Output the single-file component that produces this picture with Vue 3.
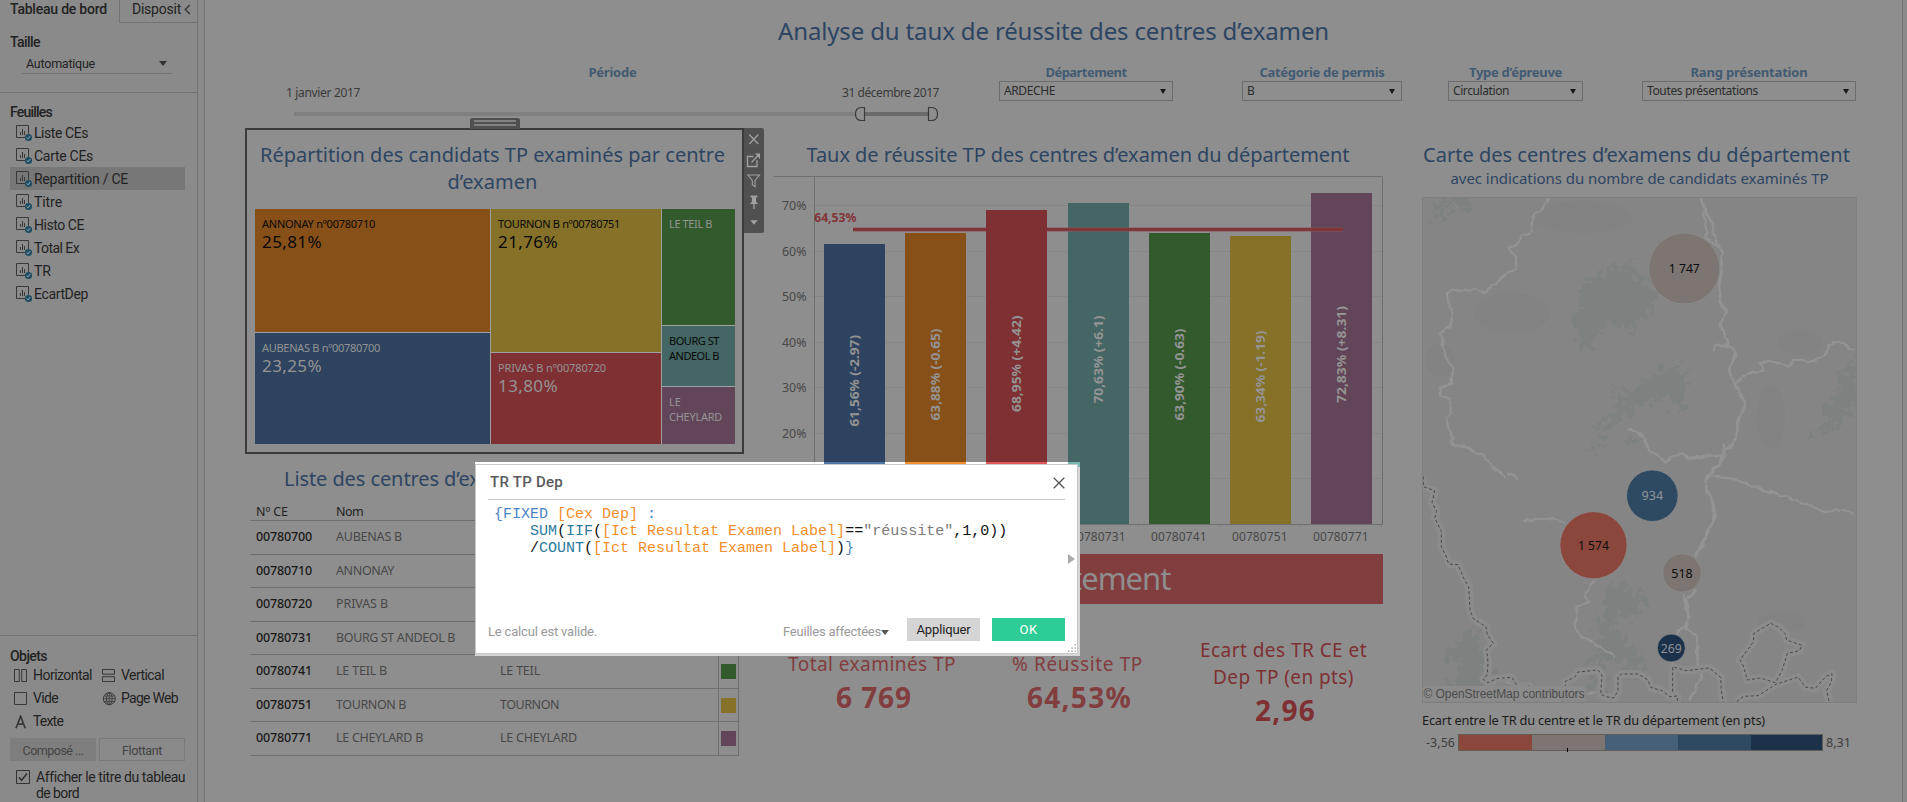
<script setup>
// Tracks a label out (or in) so that it occupies the given width.
const vFit = {
  mounted(el, { value }) {
    const natural = el.getBoundingClientRect().width
    el.style.letterSpacing = (value - natural) / el.textContent.length + 'px'
  }
}

const sheets = [
  ['Liste CEs', 54], ['Carte CEs', 59], ['Repartition / CE', 94], ['Titre', 28],
  ['Histo CE', 50], ['Total Ex', 45], ['TR', 17], ['EcartDep', 54]
]

const filters = [
  { label: 'Département', lw: 81, value: 'ARDECHE', vw: 51, cls: 'f-dep' },
  { label: 'Catégorie de permis', lw: 125, value: 'B', vw: 7, cls: 'f-cat' },
  { label: 'Type d’épreuve', lw: 93, value: 'Circulation', vw: 56, cls: 'f-type' },
  { label: 'Rang présentation', lw: 117, value: 'Toutes présentations', vw: 111, cls: 'f-rang' }
]

const centres = [
  { code: '00780700', nom: 'AUBENAS B', w: 66, c: 'blue' },
  { code: '00780710', nom: 'ANNONAY', w: 58, c: 'orange' },
  { code: '00780720', nom: 'PRIVAS B', w: 52, c: 'red' },
  { code: '00780731', nom: 'BOURG ST ANDEOL B', w: 119, c: 'teal' },
  { code: '00780741', nom: 'LE TEIL B', w: 51, ville: 'LE TEIL', vw: 40, c: 'green' },
  { code: '00780751', nom: 'TOURNON B', w: 70, ville: 'TOURNON', vw: 59, c: 'yellow' },
  { code: '00780771', nom: 'LE CHEYLARD B', w: 87, ville: 'LE CHEYLARD', vw: 77, c: 'purple' }
]

const bars = [
  { x: 50, top: 68, label: '61,56% (-2.97)', y1: 159, y2: 250.5, c: 'blue' },
  { x: 131, top: 57, label: '63,88% (-0.65)', y1: 152.5, y2: 244.5, c: 'orange' },
  { x: 212, top: 34, label: '68,95% (+4.42)', y1: 139.5, y2: 236, c: 'red' },
  { x: 294, top: 27, label: '70,63% (+6.1)', y1: 139.5, y2: 227.5, c: 'teal', code: '00780731' },
  { x: 375, top: 57, label: '63,90% (-0.63)', y1: 152.5, y2: 244.5, c: 'green', code: '00780741' },
  { x: 456, top: 60, label: '63,34% (-1.19)', y1: 154.5, y2: 246.5, c: 'yellow', code: '00780751' },
  { x: 537, top: 17, label: '72,83% (+8.31)', y1: 130, y2: 227, c: 'purple', code: '00780771' }
]
const ticks = [
  ['70%', 29.5], ['60%', 75.5], ['50%', 120.5], ['40%', 166.5], ['30%', 211.5], ['20%', 257.5], ['', 302.5]
]
const bubbles = [
  { x: 262.3, y: 71.5, r: 35.5, t: '1 747', w: 31, fill: '#7c7572', ink: '#0c0c0c' },
  { x: 230.3, y: 298.7, r: 25.8, t: '934', w: 21.5, fill: '#2e4a63', ink: '#8f9499' },
  { x: 171.5, y: 348.2, r: 33.6, t: '1 574', w: 31, fill: '#8b473c', ink: '#0c0c0c' },
  { x: 260, y: 376, r: 19.2, t: '518', w: 21.5, fill: '#7c7572', ink: '#0c0c0c' },
  { x: 249.3, y: 451, r: 14, t: '269', w: 21, fill: '#1b3049', ink: '#8f9499' }
]
</script>

<template>
  <div class="app">
    <aside class="side">
      <div class="tabs">
        <div class="tab on"><b v-fit="97">Tableau de bord</b></div>
        <div class="tab off">
          <span class="clip"><span v-fit="49">Disposit</span></span>
          <svg width="7" height="11" viewBox="0 0 7 11"><path d="M5.8 1 1.3 5.5 5.8 10" fill="none" stroke="#333" stroke-width="1.3" /></svg>
        </div>
      </div>
      <h4 class="taille"><b v-fit="30">Taille</b></h4>
      <div class="select"><span v-fit="69">Automatique</span><i class="tri"></i></div>
      <div class="feuilles">
        <h4><b v-fit="42">Feuilles</b></h4>
        <div v-for="(s, i) in sheets" :key="s[0]" class="sheet" :class="{ active: i === 2 }">
          <svg width="17" height="17" viewBox="0 0 17 17">
            <path d="M9.3 12.5H.5V.5h12v8.3" fill="none" stroke="#383838" />
            <path d="M4.5 10V7M6.5 10V4M8.5 10V6" stroke="#383838" />
            <circle cx="12.5" cy="12.5" r="3.6" fill="#1f4d63" />
            <path d="m10.8 12.5 1.2 1.3 2.2-2.6" fill="none" stroke="#a5b0b5" />
          </svg>
          <span v-fit="s[1]">{{ s[0] }}</span>
        </div>
      </div>
      <div class="objets">
        <h4><b v-fit="37">Objets</b></h4>
        <div class="objs">
          <div><svg width="14" height="14" viewBox="0 0 14 14"><path d="M.5.5h4.8v12H.5zM7.7.5h4.8v12H7.7z" /></svg><span v-fit="59">Horizontal</span></div>
          <div><svg width="14" height="14" viewBox="0 0 14 14"><path d="M.5.5h12v4.7H.5zM.5 7.7h12v4.8H.5z" /></svg><span v-fit="43">Vertical</span></div>
          <div><svg width="14" height="14" viewBox="0 0 14 14"><path d="M.5.5h12v12H.5z" /></svg><span v-fit="25">Vide</span></div>
          <div><svg width="14" height="14" viewBox="0 0 14 14"><circle cx="7.3" cy="6.7" r="6" /><ellipse cx="7.3" cy="6.7" rx="2.8" ry="6" /><path d="M7.3.7v12M2 4h10.6M1.3 6.7h12M2 9.5h10.6" stroke-width=".8" /></svg><span v-fit="57">Page Web</span></div>
          <div><svg width="14" height="14" viewBox="0 0 14 14"><path d="M2 13.3 6.6 1.3l4.6 12M3.6 9.2h6" stroke-width="1.7" /></svg><span v-fit="30">Texte</span></div>
        </div>
        <div class="modes">
          <div class="mode sel"><span v-fit="61">Composé ...</span></div>
          <div class="mode"><span v-fit="40">Flottant</span></div>
        </div>
        <div class="check">
          <svg width="14" height="14" viewBox="0 0 14 14"><path d="M.5.5h13v13H.5z" fill="none" stroke="#333" /><path d="m3 7.3 2.6 3L11 3.5" fill="none" stroke="#333" stroke-width="1.5" /></svg>
          <div><span v-fit="148">Afficher le titre du tableau</span><br><span v-fit="43">de bord</span></div>
        </div>
      </div>
    </aside>

    <main class="canvas">
      <h1><span v-fit="551">Analyse du taux de réussite des centres d’examen</span></h1>

      <div class="filters">
        <div class="period">
          <div class="flabel"><b v-fit="48">Période</b></div>
          <div class="dates"><span v-fit="74">1 janvier 2017</span><span v-fit="97">31 décembre 2017</span></div>
          <svg class="slider" width="655" height="16" viewBox="0 0 655 16">
            <path d="M9 6h562v4H9z" fill="#808080" />
            <path d="M580 6h64v4h-64z" fill="#6a6a6a" />
            <path d="M579.5 1.500v13h-3c-4.500 0-6-3-6-6.500s1.500-6.500 6-6.500zM643.500 1.500v13h3c4.500 0 6-3 6-6.500s-1.500-6.500-6-6.500z" fill="#8e8e8e" stroke="#3a3a3a" stroke-width="1.200" />
          </svg>
        </div>
        <div v-for="f in filters" :key="f.label" class="filter" :class="f.cls">
          <div class="flabel"><b v-fit="f.lw">{{ f.label }}</b></div>
          <div class="drop"><span v-fit="f.vw">{{ f.value }}</span><i class="tri dk"></i></div>
        </div>
      </div>

      <div class="cols">
        <section class="left">
          <div class="zone">
            <div class="grip"><i></i><i></i></div>
            <div class="panel">
              <h2><span v-fit="465">Répartition des candidats TP examinés par centre</span><br><span v-fit="90">d’examen</span></h2>
              <div class="tree">
                <div class="tcol a">
                  <div class="tile orange dark"><span v-fit="113">ANNONAY nº00780710</span><em v-fit="60">25,81%</em></div>
                  <div class="tile blue"><span v-fit="118">AUBENAS B nº00780700</span><em v-fit="60">23,25%</em></div>
                </div>
                <div class="tcol b">
                  <div class="tile yellow dark"><span v-fit="122">TOURNON B nº00780751</span><em v-fit="60">21,76%</em></div>
                  <div class="tile red"><span v-fit="108">PRIVAS B nº00780720</span><em v-fit="60">13,80%</em></div>
                </div>
                <div class="tcol c">
                  <div class="tile green"><span v-fit="43">LE TEIL B</span></div>
                  <div class="tile teal dark"><span v-fit="50">BOURG ST</span><span v-fit="50">ANDEOL B</span></div>
                  <div class="tile purple"><span v-fit="12">LE</span><span v-fit="53">CHEYLARD</span></div>
                </div>
              </div>
            </div>
            <svg class="tools" width="20" height="105" viewBox="0 0 20 105" fill="none" stroke="#a0a0a0" stroke-width="1.300">
              <path d="M0 0h18a2 2 0 0 1 2 2v101a2 2 0 0 1-2 2H0z" fill="#505050" stroke="none" />
              <path d="m5.300 6.500 9 9.500M14.300 6.500l-9 9.500" />
              <path d="M9.500 28.500h-6v10h9.500v-6.500M7.500 34.500l7-7.500" />
              <path d="M11 25.500h5v5.500z" fill="#a0a0a0" stroke="none" />
              <path d="M3.800 47h11.800l-4.500 5.500v6.300l-2.800-2v-4.300z" stroke-width="1.100" />
              <path d="M6.500 67.500h7v1.500l-1.500.8v3.700l2 2.500h-8l2-2.500v-3.700l-1.500-.8z" fill="#a0a0a0" stroke="none" />
              <path d="M10 76v5" />
              <path d="M6.300 92.300h7.400L10 96.800z" fill="#a0a0a0" stroke="none" />
            </svg>
          </div>
          <h2 class="ltitle"><span v-fit="249">Liste des centres d’examen</span></h2>
          <div class="table">
            <div class="tr th"><span><i v-fit="32">Nº CE</i></span><span><i v-fit="27">Nom</i></span></div>
            <div v-for="c in centres" :key="c.code" class="tr">
              <span class="code"><i v-fit="56">{{ c.code }}</i></span>
              <span><i v-fit="c.w">{{ c.nom }}</i></span>
              <span><i v-if="c.ville" v-fit="c.vw">{{ c.ville }}</i></span>
              <span class="sw"><u :class="c.c"></u></span>
            </div>
          </div>
        </section>

        <section class="mid">
          <h2><span v-fit="543">Taux de réussite TP des centres d’examen du département</span></h2>
          <svg class="chart" width="609" height="378" viewBox="0 0 609 378">
            <g v-for="t in ticks" :key="t[1]">
              <path :d="`M37 ${t[1]}H608`" stroke="#868686" />
              <text v-if="t[0]" x="8" :y="t[1] + 4" textLength="24.500" lengthAdjust="spacingAndGlyphs" class="ax">{{ t[0] }}</text>
            </g>
            <path d="M0 .5H608.500V348.500H40.500V0" fill="none" stroke="#6f6f6f" />
            <g v-for="b in bars" :key="b.label">
              <rect :x="b.x" :y="b.top" width="61" :height="348 - b.top" :class="'s-' + b.c" />
              <path :d="`M${b.x + 70.500} 349v4`" stroke="#868686" />
              <text v-if="b.code" :x="b.x + 2" y="364.700" textLength="55.500" class="ax">{{ b.code }}</text>
            </g>
            <path d="M79 53.500H212M273 53.500H569" stroke="#88575a" stroke-width="4" />
            <path d="M79 53.500H569" stroke="#7e3033" stroke-width="2.600" />
            <text x="40.300" y="46" textLength="42" lengthAdjust="spacingAndGlyphs" class="avg">64,53%</text>
            <text v-for="b in bars" :key="b.label" class="pct" :transform="`translate(${b.x + 35.300} ${b.y2}) rotate(-90)`" :textLength="b.y2 - b.y1" lengthAdjust="spacingAndGlyphs">{{ b.label }}</text>
          </svg>
          <div class="banner"><span v-fit="184">Département</span></div>
          <div class="kpis">
            <div class="kpi"><span v-fit="168">Total examinés TP</span><b v-fit="76">6 769</b></div>
            <div class="kpi"><span v-fit="131">% Réussite TP</span><b v-fit="105">64,53%</b></div>
            <div class="kpi last"><span v-fit="167">Ecart des TR CE et</span><span v-fit="141">Dep TP (en pts)</span><b v-fit="61">2,96</b></div>
          </div>
        </section>

        <section class="right">
          <h2><span v-fit="427">Carte des centres d’examens du département</span></h2>
          <h3><span v-fit="378">avec indications du nombre de candidats examinés TP</span></h3>
          <svg class="map" width="435" height="506" viewBox="0 0 435 506">
            <defs>
              <filter id="rough" x="-10%" y="-10%" width="120%" height="120%">
                <feTurbulence type="fractalNoise" baseFrequency=".14" numOctaves="4" seed="4" result="n" />
                <feDisplacementMap in="SourceGraphic" in2="n" scale="30" xChannelSelector="R" yChannelSelector="G" />
              </filter>
              <filter id="wobble" x="-10%" y="-10%" width="120%" height="120%">
                <feTurbulence type="fractalNoise" baseFrequency=".13" numOctaves="2" seed="9" result="n" />
                <feDisplacementMap in="SourceGraphic" in2="n" scale="5" xChannelSelector="R" yChannelSelector="G" />
              </filter>
            </defs>
            <rect width="435" height="506" fill="#858585" />
            <g fill="#838383">
              <ellipse cx="90" cy="116" rx="38" ry="20" /><ellipse cx="18" cy="163" rx="14" ry="16" />
              <ellipse cx="378" cy="145" rx="22" ry="13" /><ellipse cx="349" cy="220" rx="14" ry="32" />
              <ellipse cx="160" cy="20" rx="50" ry="16" /><ellipse cx="360" cy="425" rx="24" ry="10" />
            </g>
            <g filter="url(#rough)" fill="#7d8180">
              <path d="M12 6l10-5 22-1 9 10-7 5-14-5-9 3-2 9-9 4z" />
              <path d="M160 86l14-6 12-10 14-3 13 2 1 11 9 8 12 5 2 6-7 7-4 12-9 8-9 8-12-6-10-2-4 8-10 4-2 13-8 5-6-12-1-14-6-8 8-10z" />
              <path d="M180 188l14 6 10 2 8-5 10-6 14-10 15-8 10 5 2 14-4 10 5 12-6 9-8-13-12-6-10 10-17 2-9 12-19 6-18 5 16-12 12-4 5-16z" />
              <path d="M168 247l14-6 10 3-12 4-10 6zM200 238l20 4-10 6z" />
              <path d="M434 156v56l-9 1-6 8-8 14-14 3-8 7 8-16 8-9-4-8 14-14 5-17z" />
              <path d="M184 392l13-5 11 4 6 5 9-2 5 3-10 11-2 11-12 1-8-3-5 14 8 8 5 12 15 4 5 6-3 18-12-2-9-12-14-3-5 6 2 30-12-2 1-16-10-12 4-6 10 2 3-14-5-12 4-12z" />
              <path d="M40 437l14-6 6 4-2 12 8 8 1 14-6 8 6 6 2 14-14 4-30-2 4-14 8-8-4-10-10-8 4-8 9-2z" />
            </g>
            <g fill="none" stroke="#939393" stroke-linejoin="round" filter="url(#wobble)">
              <g transform="translate(-22 -17) scale(.33333)" stroke-width="7">
                <path d="M448 50l-25 42-22 10-5 50-12 12-22 2-8 24-24 12 0 16 22 14-4 34-32 18-26 24-18 10-14 20-34-12-36 8-28-6-16 12 2 44 10 6-2 50-32 16 6 30 6 26-2 8 28 46-6 44-34 16 0 20 30 14 2 40-12 14 14 46 2 34 50 10 26 20 20 2 24 30 24 22 14 16M322 880l18 4 16 12" />
                <path d="M902 50l18 48 18 32 6 50 22 32-2 66-8 44 8 54 18 20-22 38 24 50-2 18M940 514l8-14 36-8 26 30-18 34-2 28 18 32 30 60-26 48 0 30-14 44-28 14-6 30" stroke-width="8" />
                <path d="M912 90l8 86 46 34" />
                <path d="M1008 610l22-20 26-12 34-10-8-18 20-8 68 14 10-14 40 2 28-2 26-18 14-26 16-14 28 6 12 12 18 8" />
                <path d="M688 748l38 16 22 50 32 14 14 22 18-20 38-10 22 16 70-10 18-4 8 24M970 790l8 40-20 24-42 48" />
              </g>
              <g transform="translate(-22 253) scale(.33333)" stroke-width="8">
                <path d="M970 0l-10 36-42 44-2 20 22 60 2 56-34 72-20 34M926 78l70 8 110 38 90 28 76 34 54-8 36 14" stroke-width="7" />
                <path d="M914 110l28 52 2 44-36 66-22 44M886 420l-24 28 2 50-8 32-24 10-6 60M852 430l10 70-4 40 30 12 6 90 12 40-38 66" />
                <path d="M368 214l32-6 54-2 42 14M586 390l-34 42 16 24-36 14-2 40-12 8 24 40 36 18 40 28 28 18" stroke-width="6" />
                <path d="M282 706l6-26 30 16 70 6M560 730l36-4 30 24" />
              </g>
            </g>
            <g transform="translate(-22 253) scale(.33333)" fill="none" stroke-linejoin="round">
              <g v-for="k in 2" :key="k" :class="k === 1 ? 'halo' : 'border'">
                <path d="M70 80v30l34 12-8 36 14 26-6 20 20 40v46l14 28 8 24 28 2 18 42 14 24 4 70 10 26 38 24 4 24 18 26-20 18 4 40-2 36-12 14 14 10 26-12 46-4 18 30 34-4 8 18 30 14 18 24 42-6 10-34v-30l28-12 10-16 60-6 12 16-4 56 14 8 26 4 12-22v-40l10-10h50l30 18 8 22 34 10 24 18 22-2v30l14 20" />
                <path d="M818 725v-75l40 12 70-8 34 28 2 40 6 36" />
                <path d="M1112 520l24 12 20 20 4 18 46 16-8 16-36 8-16 52-20 36-44-14-40 6-12-42-10-18 40-54 2-26z" />
                <path d="M1010 755l20-16 44-2 54-34 66-22 22 30 30 4 32-36 18-8-2 26-14 24 8 36" />
              </g>
            </g>
            <rect x=".5" y=".5" width="434" height="505" fill="none" stroke="#7f7f7f" />
            <rect x="1" y="489" width="162" height="15.500" fill="#8b8b8b" />
            <text x="1.500" y="501" textLength="161" class="osm">© OpenStreetMap contributors</text>
            <g v-for="b in bubbles" :key="b.t">
              <circle :cx="b.x" :cy="b.y" :r="b.r" :fill="b.fill" stroke="#8b8b8b" stroke-width=".8" />
              <text :x="b.x - b.w / 2" :y="b.y + 4.500" :textLength="b.w" lengthAdjust="spacingAndGlyphs" :fill="b.ink" class="bub">{{ b.t }}</text>
            </g>
          </svg>
          <div class="ltext"><span v-fit="343">Ecart entre le TR du centre et le TR du département (en pts)</span></div>
          <div class="legend"><span v-fit="29">-3,56</span><div class="ramp"><i></i><i></i><i></i><i></i><i></i><u></u></div><span v-fit="25">8,31</span></div>
        </section>
      </div>
    </main>

    <div class="dialog">
      <div class="strip"><i class="p1"></i><i class="p2"></i><i class="p3"></i><i class="p4"></i></div>
      <div class="dbody">
        <header><b v-fit="73">TR TP Dep</b><svg width="12" height="12" viewBox="0 0 12 12"><path d="M.7.7 11.300 11.300M11.300.7.7 11.300" stroke="#555" stroke-width="1.300" /></svg></header>
        <pre><span class="kw">{FIXED</span> <span class="fd">[Cex Dep]</span> <span class="kw">:</span>
    <span class="fn">SUM</span>(<span class="fn">IIF</span>(<span class="fd">[Ict Resultat Examen Label]</span>==<span class="st">"réussite"</span>,1,0))
    /<span class="fn">COUNT</span>(<span class="fd">[Ict Resultat Examen Label]</span>)<span class="kw">}</span></pre>
        <footer>
          <span class="ok-msg" v-fit="109">Le calcul est valide.</span>
          <span class="aff" v-fit="98">Feuilles affectées</span><i class="tri sm"></i>
          <button class="apply"><span v-fit="54">Appliquer</span></button>
          <button class="ok"><span v-fit="18">OK</span></button>
        </footer>
        <i class="expand"></i>
        <svg class="resize" width="9" height="9" viewBox="0 0 9 9" fill="#aaa"><path d="M6.500 0h1.500v1.500H6.500zM6.500 3.300h1.500v1.500H6.500zM6.500 6.500h1.500v1.500H6.500zM3.300 3.300h1.500v1.500H3.300zM3.300 6.500h1.500v1.500H3.300zM0 6.500h1.500v1.500H0z" /></svg>
      </div>
    </div>
  </div>
</template>

<style>
body { background: #8e8e8e; overflow: hidden; }
</style>

<style scoped>
.app { position: relative; display: flex; gap: 6px; width: 1907px; height: 802px; overflow: hidden; background: #8a8a8a; font-family: "Noto Sans", "Open Sans", sans-serif; color: #222; }
.app * { box-sizing: border-box; }
h1, h2, h3, h4, pre { margin: 0; font-weight: 400; }
span, b, i, em { font-style: normal; white-space: nowrap; }
h1 span, h2 span, h3 span, h4 b, .tab b, .clip span, .flabel b, .dates span, .drop span, .sheet span, .objs span, .mode span, .check span,
.tile span, .tile em, .tr i, .kpi span, .kpi b, .banner span, .ltext span, .legend span, .dialog b, .dialog span { display: inline-block; }
.dialog pre span { display: inline; }
.tri { width: 0; height: 0; border: 4.500px solid transparent; border-bottom: 0; border-top: 5.500px solid #333; }

.blue { background: #2e435f; } .orange { background: #875019; } .red { background: #7e3033; } .teal { background: #446664; }
.green { background: #335a2d; } .yellow { background: #857128; } .purple { background: #63455a; }
.s-blue { fill: #2e435f; } .s-orange { fill: #875019; } .s-red { fill: #7e3033; } .s-teal { fill: #446664; }
.s-green { fill: #335a2d; } .s-yellow { fill: #857128; } .s-purple { fill: #63455a; }

.side { width: 198px; height: 802px; border-right: 1px solid #727272; font: 14px/23px Roboto, sans-serif; color: #222; display: flex; flex-direction: column; }
.side b { font-weight: 500; }
.tabs { display: flex; height: 23px; }
.tab { height: 23px; line-height: 19px; }
.tab.on { width: 119px; padding-left: 10px; }
.tab.off { flex: 1; display: flex; padding-left: 12px; border-left: 1px solid #727272; border-bottom: 1px solid #727272; }
.clip { width: 49px; }
.tab svg { margin: 4px 0 0 3px; }
.taille { margin-top: 8px; padding-left: 10px; }
.select { width: 150px; height: 21px; margin: -1px 0 18px 22px; padding: 1px 5px 0 4px; border-bottom: 1px solid #727272; display: flex; justify-content: space-between; align-items: center; font-size: 12.500px; line-height: 20px; }
.feuilles { border-top: 1px solid #727272; height: 543px; padding-top: 9px; }
.feuilles h4 { padding-left: 10px; height: 19px; line-height: 21px; }
.sheet { width: 175px; height: 23px; margin-left: 10px; padding: 4px 0 0 6px; display: flex; gap: 1px; line-height: 16px; }
.sheet svg { flex: none; }
.sheet.active { background: #777; }
.objets { border-top: 1px solid #727272; flex: 1; padding: 9px 12px 0 10px; }
.objets h4 { height: 19px; line-height: 22px; }
.objs { display: grid; grid-template-columns: 88px 88px; grid-auto-rows: 23px; padding-left: 4px; }
.objs div { display: flex; align-items: center; gap: 5px; }
.objs svg { fill: none; stroke: #383838; }
.modes { display: flex; gap: 3px; margin-top: 5px; }
.mode { width: 86px; height: 23px; border: 1px solid #7a7a7a; text-align: center; font-size: 12.500px; line-height: 24px; color: #444; }
.mode.sel { background: #7e7e7e; border-color: #7e7e7e; }
.check { display: flex; gap: 6px; margin: 9px 0 0 6px; line-height: 16px; }
.check svg { flex: none; }
.check div { margin-top: -1px; white-space: nowrap; }

.canvas { width: 1699px; height: 802px; border-left: 1px solid #757575; border-right: 1px solid #757575; background: #8e8e8e; padding-left: 40px; }
h1 { margin-left: -40px; height: 61px; text-align: center; font-size: 24px; line-height: 61px; color: #2d4562; }
h2 { font-size: 20px; color: #2d4562; text-align: center; }
h3 { height: 20px; font-size: 15px; line-height: 20px; color: #2d4562; text-align: center; }

.filters { display: flex; height: 67px; padding-left: 40px; }
.period { width: 655px; }
.flabel { height: 20px; line-height: 23px; font-size: 13px; text-align: center; color: #425b74; }
.dates { display: flex; justify-content: space-between; padding: 2px 1px 0; height: 25px; font-size: 12px; line-height: 19px; color: #3a3a3a; }
.slider { display: block; }
.drop { height: 20px; border: 1px solid #6c6c6c; display: flex; justify-content: space-between; align-items: center; padding: 0 6px 0 4px; font-size: 12px; line-height: 20px; color: #2c2c2c; }
.tri.dk { border-top-color: #181818; border-width: 5px 3.500px 0; }
.f-dep { margin-left: 59px; width: 174px; }
.f-cat { margin-left: 69px; width: 160px; }
.f-type { margin-left: 46px; width: 135px; }
.f-rang { margin-left: 59px; width: 214px; }

.cols { display: flex; align-items: flex-start; }
.left { width: 519px; }
.zone { position: relative; display: flex; align-items: flex-start; }
.grip { position: absolute; left: 225px; top: -10px; width: 50px; height: 11px; border-radius: 2px 2px 0 0; background: #505050; padding: 2px 4px; display: flex; flex-direction: column; gap: 2px; }
.grip i { height: 2px; background: #828282; }
.panel { width: 499px; height: 326px; border: 2px solid #3b3b3b; padding: 11px 8px 0; }
.panel h2 { line-height: 27px; white-space: nowrap; height: 68px; margin: 0 -6px 0 -10px; }
.tree { display: flex; gap: 1px; width: 480px; height: 235px; background: #a0a0a0; }
.tcol { display: grid; gap: 1px; }
.tcol.a { width: 235px; grid-template-rows: 123px 111px; }
.tcol.b { width: 170px; grid-template-rows: 143px 91px; }
.tcol.c { width: 73px; grid-template-rows: 116px 60px 57px; }
.tile { padding: 7px 0 0 7px; display: flex; flex-direction: column; align-items: flex-start; font-size: 11px; line-height: 15px; color: #949494; }
.tile em { font-size: 17px; line-height: 22px; }
.tile.dark { color: #080808; }
.ltitle { height: 48px; line-height: 49px; padding-left: 39px; text-align: left; }
.table { margin-left: 5px; width: 489px; border-top: 0; font-size: 12.500px; }
.tr { display: grid; grid-template-columns: 86px 164px 218px 21px; height: 33.500px; line-height: 31px; border-bottom: 1px solid #6f6f6f; color: #484848; }
.tr.th { height: 19px; line-height: 19px; color: #222; }
.tr > span:first-child { padding-left: 6px; }
.code { color: #181818; font-weight: 500; }
.sw { border: solid #6f6f6f; border-width: 0 1px; padding: 9px 2px; }
.sw u { display: block; width: 15px; height: 15px; }

.mid { width: 609px; margin-left: 10px; }
.mid h2, .right h2 { line-height: 53px; white-space: nowrap; }
.mid h2 { height: 48px; margin-left: -1px; }
.chart { display: block; }
.ax { font-size: 12px; fill: #474747; }
.avg { font-size: 12.500px; font-weight: 700; fill: #823437; }
.pct { font-size: 12.500px; font-weight: 700; fill: #949494; }
.banner { height: 50px; line-height: 49px; background: #823d3f; color: #8e8e8e; font-size: 31px; text-align: center; }
.kpis { display: grid; grid-template-columns: 197px 214px 198px; }
.kpi { padding-top: 47px; display: flex; flex-direction: column; align-items: center; font-size: 19px; line-height: 27px; color: #823d3f; }
.kpi.last { padding-top: 33px; color: #7e3033; }
.kpi span { margin-left: -1px; }
.kpi b { font-size: 28px; line-height: 39px; margin-left: 3px; }

.right { width: 435px; margin-left: 39px; }
.right h2 { height: 40px; margin: 0 0 0 -6px; }
.map { display: block; margin-top: 9px; }
.halo { stroke: #8b8b8b; stroke-width: 24; }
.border { stroke: #4a4a4a; stroke-width: 3; stroke-dasharray: 9 7; }
.osm { font: 12px "Liberation Sans", sans-serif; fill: #4c4c4c; }
.bub { font-size: 13px; }
.ltext { margin-top: 8px; height: 18px; line-height: 18px; font-size: 12.800px; color: #1c1c1c; }
.legend { display: flex; align-items: center; gap: 3px; margin-top: 5px; height: 17px; padding-left: 4px; font-size: 12.500px; line-height: 15px; color: #3d3d3d; }
.ramp { position: relative; display: grid; grid-template-columns: 73px 73px 73px 73px 71px; width: 365px; height: 17px; border: 1px solid #625d57; }
.ramp i:nth-child(1) { background: #8b473c; } .ramp i:nth-child(2) { background: #7c7572; } .ramp i:nth-child(3) { background: #466079; }
.ramp i:nth-child(4) { background: #2e4a63; } .ramp i:nth-child(5) { background: #1b3049; }
.ramp u { position: absolute; left: 108px; top: 13px; width: 1px; height: 4px; background: #000; }

.dialog { position: absolute; left: 475px; top: 462px; width: 605px; height: 194px; background: #d6d6d6; font-family: Roboto, sans-serif; }
.strip { display: flex; height: 2px; background: #fff; }
.strip .p1 { width: 61px; margin-left: 349px; background: #4e79a7; }
.strip .p2 { width: 61px; margin-left: 20px; background: #f28e2b; }
.strip .p3 { width: 61px; margin-left: 20px; background: #e15759; }
.strip .p4 { width: 12px; margin-left: 21px; height: 5px; background: #76b7b2; }
.dbody { position: relative; width: 603px; height: 190px; border: 1px solid #c8c8c8; background: #fff; padding: 0 12px; }
.dialog header { height: 35px; border-bottom: 1px solid #c8c8c8; display: flex; justify-content: space-between; padding: 0 0 0 2px; line-height: 35px; font-size: 15px; color: #5a5a5a; }
.dialog header b { font-weight: 500; }
.dialog header svg { margin-top: 12px; }
.dialog pre { height: 118px; padding: 6px 0 0 6px; font: 15px/17px "Liberation Mono", monospace; color: #111; }
.kw { color: #4a84c4; } .fd { color: #f28e2b; } .fn { color: #2d7a9c; } .st { color: #7a7a7a; }
.dialog footer { display: flex; font-size: 13px; color: #999; line-height: 28px; }
.aff { margin-left: 186px; }
.tri.sm { border-width: 5px 4px 0; border-top-color: #555; margin: 12px 18px 0 0; }
button { width: 73px; height: 23px; border: 0; padding: 0; background: #d4d4d4; color: #222; font: 13px/23px Roboto, sans-serif; text-align: center; }
button.ok { margin-left: 12px; background: #2ecc96; color: #fff; }
.expand { position: absolute; right: 2px; top: 89px; border: 5px solid transparent; border-left: 7px solid #aaa; border-right: 0; }
.resize { position: absolute; right: 0; bottom: 0; }
</style>
